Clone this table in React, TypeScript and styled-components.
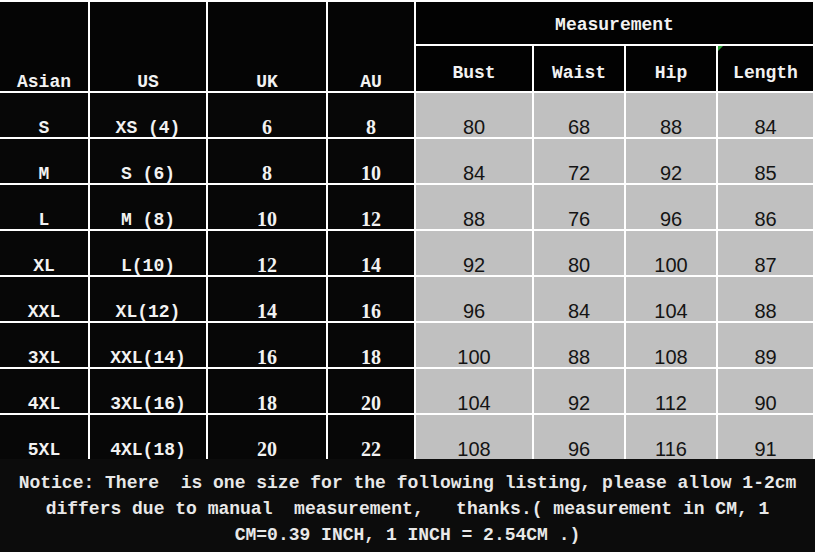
import styled, { createGlobalStyle } from "styled-components"

const GlobalStyle = createGlobalStyle`
	html, body {
		margin: 0;
		padding: 0;
		background: #0c0c0c;
	}
`

const MONO = `"Liberation Mono", "DejaVu Sans Mono", monospace`
const SERIF = `"Liberation Serif", "DejaVu Serif", serif`
const SANS = `"Liberation Sans", Arial, sans-serif`

type Face = "mono" | "serif" | "sans"

const faces: Record<Face, string> = {
	mono: `font-family: ${MONO}; font-size: 18px; font-weight: bold;`,
	serif: `font-family: ${SERIF}; font-size: 20px; font-weight: bold;`,
	sans: `font-family: ${SANS}; font-size: 20px; font-weight: normal;`,
}

const Sheet = styled.div`
	width: 815px;
	height: 552px;
	background: #0c0c0c;
	display: flex;
	flex-direction: column;
	overflow: hidden;
`

const Table = styled.div`
	display: grid;
	grid-template-columns: 88px 116px 118px 86px 116px 90px 90px 95px;
	grid-template-rows: 42px 45px repeat(8, 44px);
	gap: 2px;
	padding: 2px 2px 0 0;
	background: #ffffff;
`

const Cell = styled.div<{ $light?: boolean; $face?: Face }>`
	display: flex;
	align-items: flex-end;
	justify-content: center;
	line-height: 1;
	white-space: pre;
	background: ${(p) => (p.$light ? "#c0c0c0" : "#070707")};
	color: ${(p) => (p.$light ? "#141414" : "#f2f2f2")};
	${(p) => faces[p.$face ?? "mono"]}
`

const SizeHead = styled(Cell)`
	grid-row: span 2;
	background: #050505;
`

const MeasureHead = styled(Cell)`
	grid-column: span 4;
	align-items: center;
	padding-top: 4px;
	background: #020202;
`

const SubHead = styled(Cell)<{ $marker?: boolean }>`
	position: relative;
	align-items: center;
	padding-top: 8px;
	background: #020202;

	&::before {
		content: "";
		display: ${(p) => (p.$marker ? "block" : "none")};
		position: absolute;
		left: 0;
		top: 0;
		border-top: 5px solid #2fa33a;
		border-right: 5px solid transparent;
	}
`

const Notice = styled.p`
	margin: 0;
	padding: 11px 10px 0;
	text-align: center;
	white-space: pre-wrap;
	font-family: ${MONO};
	font-size: 18px;
	font-weight: bold;
	line-height: 26px;
	color: #e8e8e8;
`

const rows = [
	["S", "XS (4)", "6", "8", "80", "68", "88", "84"],
	["M", "S (6)", "8", "10", "84", "72", "92", "85"],
	["L", "M (8)", "10", "12", "88", "76", "96", "86"],
	["XL", "L(10)", "12", "14", "92", "80", "100", "87"],
	["XXL", "XL(12)", "14", "16", "96", "84", "104", "88"],
	["3XL", "XXL(14)", "16", "18", "100", "88", "108", "89"],
	["4XL", "3XL(16)", "18", "20", "104", "92", "112", "90"],
	["5XL", "4XL(18)", "20", "22", "108", "96", "116", "91"],
]

const faceFor = (col: number): Face => (col < 2 ? "mono" : col < 4 ? "serif" : "sans")

const App = () => {
	return (
		<Sheet>
			<GlobalStyle />
			<Table>
				<SizeHead>Asian</SizeHead>
				<SizeHead>US</SizeHead>
				<SizeHead>UK</SizeHead>
				<SizeHead>AU</SizeHead>
				<MeasureHead>Measurement</MeasureHead>
				<SubHead>Bust</SubHead>
				<SubHead>Waist</SubHead>
				<SubHead>Hip</SubHead>
				<SubHead $marker>Length</SubHead>
				{rows.map((row) =>
					row.map((value, col) => (
						<Cell key={`${row[0]}-${col}`} $light={col >= 4} $face={faceFor(col)}>
							{value}
						</Cell>
					))
				)}
			</Table>
			<Notice>
				{"Notice: There  is one size for the following listing, please allow 1-2cm differs due to manual  measurement,   thanks.( measurement in CM, 1 CM=0.39 INCH, 1 INCH = 2.54CM .)"}
			</Notice>
		</Sheet>
	)
}

export default App
